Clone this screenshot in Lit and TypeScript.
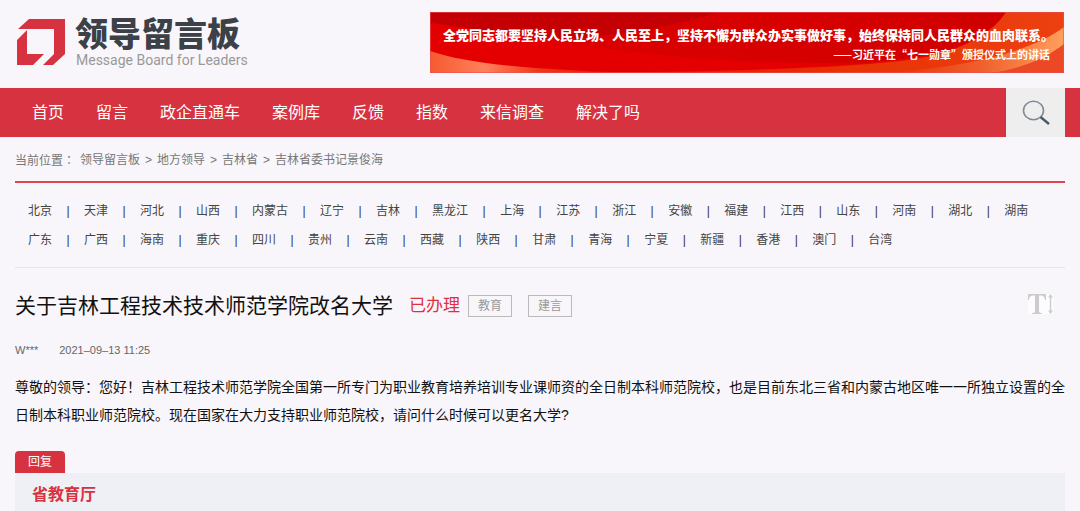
import { LitElement, html, css } from "lit";
import { customElement } from "lit/decorators.js";

const NAV = ["首页", "留言", "政企直通车", "案例库", "反馈", "指数", "来信调查", "解决了吗"];

const CRUMBS = ["领导留言板", "地方领导", "吉林省", "吉林省委书记景俊海"];

const REGIONS = [
  ["北京", "天津", "河北", "山西", "内蒙古", "辽宁", "吉林", "黑龙江", "上海", "江苏", "浙江", "安徽", "福建", "江西", "山东", "河南", "湖北", "湖南"],
  ["广东", "广西", "海南", "重庆", "四川", "贵州", "云南", "西藏", "陕西", "甘肃", "青海", "宁夏", "新疆", "香港", "澳门", "台湾"],
];

const TAGS = ["教育", "建言"];

@customElement("site-header")
class SiteHeader extends LitElement {
  static styles = css`
    :host { display: block; }
    .bar { display: flex; justify-content: space-between; align-items: flex-start; padding: 12px 16px 15px 15px; }
    .brand { display: flex; gap: 9px; padding-top: 4px; color: inherit; text-decoration: none; }
    .mark { width: 51px; height: 51px; }
    .name { padding-top: 2px; font-size: 33px; line-height: 34px; font-weight: 900; color: #3b4147; }
    .sub { font-family: Roboto, "Liberation Sans", sans-serif; font-size: 14px; line-height: 16px; color: #999; padding-left: 1px; }
    .banner { display: grid; flex: 0 1 634px; height: 61px; }
    .art { grid-area: 1 / 1; width: 100%; height: 100%; }
    .slogan {
      grid-area: 1 / 1; z-index: 1; margin: 0; padding: 13px 10px 0 13px;
      color: #fff; font-family: "Noto Sans CJK SC", sans-serif; white-space: nowrap;
    }
    .line { display: block; font-size: 13px; line-height: 20px; font-weight: 900; }
    .source { display: block; padding-right: 4px; font-size: 11px; line-height: 18px; font-weight: 700; text-align: right; }
  `;

  render() {
    return html`
      <header class="bar">
        <a class="brand" href="#">
          <svg class="mark" viewBox="0 0 51 51" aria-hidden="true">
            <g fill="#d7323f">
              <path d="M14 3H50V38L38 49H28L39 38V13H3Z" />
              <path d="M2 24 12 14V38H29L18 49H2Z" />
            </g>
          </svg>
          <div>
            <div class="name">领导留言板</div>
            <div class="sub">Message Board for Leaders</div>
          </div>
        </a>
        <div class="banner">
          <svg class="art" viewBox="0 0 634 61" preserveAspectRatio="none" aria-hidden="true">
            <defs>
              <linearGradient id="base" x1="0" x2="1">
                <stop offset="0" stop-color="#e00000" />
                <stop offset="1" stop-color="#cf0000" />
              </linearGradient>
              <linearGradient id="left" x1="0" x2="1">
                <stop offset="0" stop-color="#f65a30" />
                <stop offset=".25" stop-color="#ff805c" />
                <stop offset=".5" stop-color="#ee3814" />
                <stop offset="1" stop-color="#e60000" />
              </linearGradient>
              <linearGradient id="right" x1="0" x2="1">
                <stop offset="0" stop-color="#e60500" />
                <stop offset=".6" stop-color="#e93205" />
                <stop offset="1" stop-color="#ec4010" />
              </linearGradient>
              <linearGradient id="glow" x1="0" x2="1">
                <stop offset="0" stop-color="#e82c06" />
                <stop offset=".55" stop-color="#f0602c" />
                <stop offset="1" stop-color="#ff9f5d" />
              </linearGradient>
            </defs>
            <rect width="634" height="61" fill="url(#base)" />
            <path d="M0 0H290C230 18 150 32 80 25C45 21 18 15 0 11Z" fill="#c40005" />
            <path d="M0 11C100 24 170 38 250 45S420 52 500 50L380 61H0Z" fill="#e40000" />
            <path d="M0 39C40 53 120 59 220 61H0Z" fill="url(#left)" />
            <path d="M90 61C290 60 440 57 510 40C550 29 570 14 576 0H555H576L572 8C560 26 540 36 510 44C440 59 290 60 90 61Z" fill="#e60500" />
            <path d="M90 61C330 60 460 55 510 42C540 33 565 18 576 0H634V61Z" fill="url(#right)" />
            <path d="M450 61C540 56 604 38 634 15V61Z" fill="url(#glow)" />
            <path d="M560 61C590 57 615 47 634 32V61Z" fill="#ec4826" />
            <rect x=".5" y=".5" width="633" height="60" fill="none" stroke="#e8525a" stroke-opacity=".6" />
          </svg>
          <p class="slogan">
            <span class="line">全党同志都要坚持人民立场、人民至上，坚持不懈为群众办实事做好事，始终保持同人民群众的血肉联系。</span>
            <span class="source">——习近平在“七一勋章”颁授仪式上的讲话</span>
          </p>
        </div>
      </header>
    `;
  }
}

@customElement("site-nav")
class SiteNav extends LitElement {
  static styles = css`
    :host { display: block; background: #d7323f; }
    .nav { display: flex; justify-content: space-between; padding: 0 15px 0 32px; }
    .items { display: flex; gap: 32px; margin: 0; padding: 0; list-style: none; }
    .item { color: #fff; text-decoration: none; font-size: 16px; line-height: 49px; }
    .search {
      display: grid; place-items: center; width: 59px; margin: 0; padding: 0;
      border: 0; background: #eee; cursor: pointer;
    }
    .glass { width: 30px; height: 30px; }
  `;

  render() {
    return html`
      <nav class="nav">
        <ul class="items">
          ${NAV.map((label) => html`<li><a class="item" href="#">${label}</a></li>`)}
        </ul>
        <button class="search" aria-label="搜索">
          <svg class="glass" viewBox="0 0 30 30" fill="none">
            <ellipse cx="12.5" cy="12.5" rx="10" ry="9.2" stroke="#7f8c98" stroke-width="1.6" />
            <path d="M19.500 19 28 26" stroke="#4b5a68" stroke-width="2.4" />
          </svg>
        </button>
      </nav>
    `;
  }
}

@customElement("region-list")
class RegionList extends LitElement {
  static styles = css`
    :host { display: block; padding: 14px 0 12px 13px; border-bottom: 1px solid #e6e5e9; }
    .row { display: flex; margin: 0; padding: 0; list-style: none; font-size: 12px; line-height: 29px; white-space: nowrap; }
    .cell { display: flex; }
    .sep { width: 32px; text-align: center; color: #333; }
    .link { color: #444; text-decoration: none; }
  `;

  render() {
    return REGIONS.map(
      (row) => html`
        <ul class="row">
          ${row.map(
            (name, i) => html`<li class="cell">${i ? html`<span class="sep">|</span>` : ""}<a class="link" href="#">${name}</a></li>`
          )}
        </ul>
      `
    );
  }
}

@customElement("message-post")
class MessagePost extends LitElement {
  static styles = css`
    :host { display: block; }
    .head { display: flex; align-items: center; padding-top: 22px; }
    .title { margin: 0 16px 0 0; font-size: 21px; line-height: 32px; font-weight: 400; color: #111; }
    .status { font-size: 17px; line-height: 32px; color: #e0303f; margin-right: 8px; }
    .tags { display: flex; gap: 16px; }
    .tag { box-sizing: border-box; width: 44px; border: 1px solid #bbb; font-size: 12px; line-height: 20px; text-align: center; color: #999; }
    .resize { margin: 0 12px 4px auto; padding: 0; border: 0; background: #fff8; width: 25px; height: 20px; cursor: pointer; }
    .glyph { display: block; width: 25px; height: 20px; }
    .meta { display: flex; gap: 21px; padding-top: 20px; font-size: 11px; line-height: 16px; color: #666; }
    .text { margin: 0; padding-top: 15px; font-size: 14px; line-height: 28px; color: #111; }
  `;

  render() {
    return html`
      <div class="head">
        <h1 class="title">关于吉林工程技术技术师范学院改名大学</h1>
        <span class="status">已办理</span>
        <div class="tags">${TAGS.map((tag) => html`<span class="tag">${tag}</span>`)}</div>
        <button class="resize" aria-label="字号">
          <svg class="glyph" viewBox="0 0 25 20" fill="#ccc">
            <path d="M0 0H18V6H17C16.500 2.500 15.500 1.500 12 1.500H11V17C11 18.500 12 19 14 19V20H4V19C6 19 7 18.500 7 17V1.500H6C2.500 1.500 1.500 2.500 1 6H0Z" />
            <path d="M22.500 0 25 3.500H23.200V16.500H25L22.500 20 20 16.500H21.800V3.500H20Z" />
          </svg>
        </button>
      </div>
      <div class="meta"><span>W***</span><time datetime="2021-09-13T11:25">2021–09–13 11:25</time></div>
      <p class="text">尊敬的领导：您好！吉林工程技术师范学院全国第一所专门为职业教育培养培训专业课师资的全日制本科师范院校，也是目前东北三省和内蒙古地区唯一一所独立设置的全日制本科职业师范院校。现在国家在大力支持职业师范院校，请问什么时候可以更名大学?</p>
    `;
  }
}

@customElement("message-reply")
class MessageReply extends LitElement {
  static styles = css`
    :host { display: block; padding-top: 22px; }
    .label { display: inline-block; vertical-align: top; padding: 0 13px; border-radius: 4px 4px 0 0; background: #d7323f; color: #fff; font-size: 12px; line-height: 22px; }
    .panel { background: #eef0f6; padding: 6px 17px 12px; }
    .dept { margin: 0; font-size: 16px; line-height: 32px; font-weight: 700; color: #d7323f; }
  `;

  render() {
    return html`
      <span class="label">回复</span>
      <section class="panel"><h2 class="dept">省教育厅</h2></section>
    `;
  }
}

@customElement("app-root")
class AppRoot extends LitElement {
  static styles = css`
    :host {
      display: block; height: 100vh; overflow: hidden; background: #f8f6fa;
      font-family: "Liberation Sans", "Noto Sans CJK SC", sans-serif;
    }
    .main { padding: 0 15px; }
    .crumbs { display: flex; gap: 5px; padding: 9px 0 7px; border-bottom: 2px solid #dc4552; font-size: 12px; line-height: 28px; color: #777; }
    .here { font-family: "Noto Sans CJK TC", sans-serif; }
    .crumb { color: inherit; text-decoration: none; }
  `;

  render() {
    return html`
      <site-header></site-header>
      <site-nav></site-nav>
      <main class="main">
        <div class="crumbs">
          <span class="here">当前位置：</span>
          ${CRUMBS.map((name, i) => html`${i ? html`<span>&gt;</span>` : ""}<a class="crumb" href="#">${name}</a>`)}
        </div>
        <region-list></region-list>
        <message-post></message-post>
        <message-reply></message-reply>
      </main>
    `;
  }
}
